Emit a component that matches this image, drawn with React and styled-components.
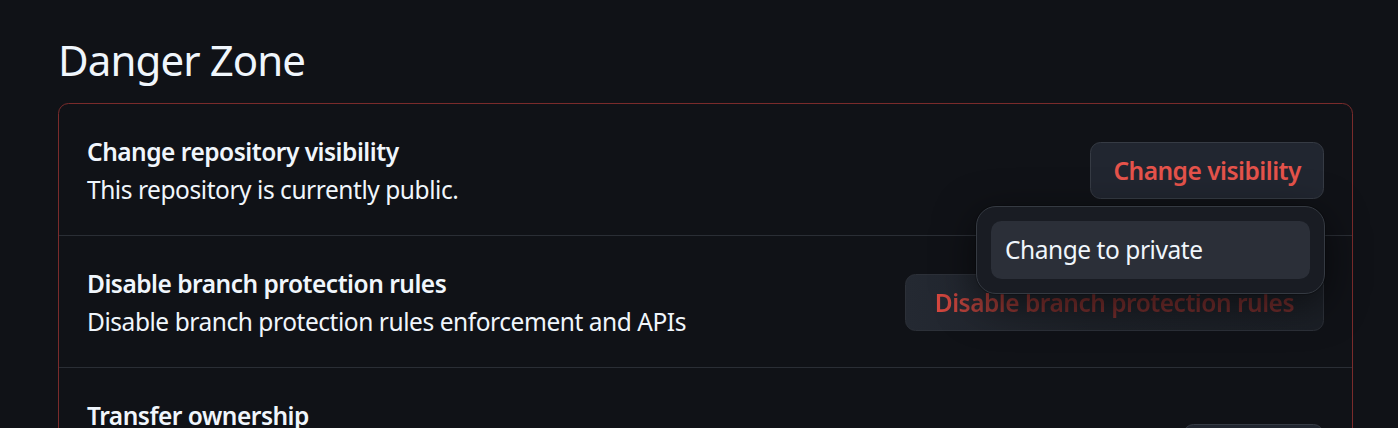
import React from "react";
import styled, { createGlobalStyle } from "styled-components";

const GlobalStyle = createGlobalStyle`
  html, body {
    margin: 0;
    background: #101217;
  }
  body {
    font-family: "Noto Sans", "Open Sans", sans-serif;
    color: #f0f6fc;
  }
`;

const Page = styled.div`
  padding: 34px 45px 0 58px;
  height: 428px;
  box-sizing: border-box;
  overflow: hidden;
`;

const Heading = styled.h2`
  margin: 0 0 17px;
  font-size: 42px;
  line-height: 52px;
  font-weight: 400;
  letter-spacing: -0.9px;
  color: #f0f6fc;
`;

const Box = styled.div`
  border: 1px solid #7a2b2b;
  border-radius: 10.5px;
`;

const Row = styled.div`
  display: flex;
  align-items: center;
  gap: 28px;
  padding: 29px 28px 27px;
  border-top: ${(p) => (p.first ? "none" : "1px solid #2a2e35")};
`;

const Info = styled.div`
  flex: 1;
  min-width: 0;
`;

const Title = styled.div`
  font-size: 24.5px;
  line-height: 37.5px;
  font-weight: 600;
  letter-spacing: -0.5px;
`;

const Desc = styled.div`
  font-size: 24.5px;
  line-height: 37.5px;
  font-weight: 400;
  letter-spacing: -0.45px;
`;

const Action = styled.div`
  position: relative;
  flex-shrink: 0;
  margin-top: -1px;
`;

const Button = styled.button`
  display: block;
  height: 57px;
  padding: 0 22px;
  border: 1px solid #363b44;
  border-radius: 10.5px;
  background: #212630;
  font-family: inherit;
  font-size: 24.5px;
  font-weight: 600;
  letter-spacing: -0.5px;
  color: #e5534b;
  white-space: nowrap;
  cursor: pointer;

  &:disabled {
    cursor: default;
    padding: 0 29px;
    background: linear-gradient(90deg, #242932 0, #1d2128 45%, #1b1f26 100%);
    border-color: #2c3038;
  }
`;

const FadedLabel = styled.span`
  background: linear-gradient(90deg, #d9483f 0, #a33c37 40px, #742d2c 120px, #6e2b2b 100%);
  -webkit-background-clip: text;
  background-clip: text;
  color: transparent;
`;

const Menu = styled.div`
  position: absolute;
  top: calc(100% + 7px);
  right: -1px;
  width: 349px;
  box-sizing: border-box;
  padding: 14px;
  background: #191c23;
  border: 1px solid #353a42;
  border-radius: 20px;
  box-shadow: 0 10px 40px rgba(0, 0, 0, 0.55), 0 0 0 1px rgba(0, 0, 0, 0.2);
  z-index: 10;
`;

const MenuItem = styled.div`
  height: 58px;
  display: flex;
  align-items: center;
  padding: 0 14px;
  border-radius: 10.5px;
  background: #2b2f38;
  font-size: 24.5px;
  letter-spacing: -0.45px;
  color: #f0f6fc;
`;

export default function App() {
  return (
    <Page>
      <GlobalStyle />
      <Heading>Danger Zone</Heading>
      <Box>
        <Row first>
          <Info>
            <Title>Change repository visibility</Title>
            <Desc>This repository is currently public.</Desc>
          </Info>
          <Action>
            <Button>Change visibility</Button>
            <Menu>
              <MenuItem>Change to private</MenuItem>
            </Menu>
          </Action>
        </Row>
        <Row>
          <Info>
            <Title>Disable branch protection rules</Title>
            <Desc>Disable branch protection rules enforcement and APIs</Desc>
          </Info>
          <Action style={{ zIndex: 0 }}>
            <Button disabled>
              <FadedLabel>Disable branch protection rules</FadedLabel>
            </Button>
          </Action>
        </Row>
        <Row>
          <Info>
            <Title>Transfer ownership</Title>
            <Desc>
              Transfer this repository to another user or to an organization
              where you have the ability to create repositories.
            </Desc>
          </Info>
          <Action>
            <Button>Transfer</Button>
          </Action>
        </Row>
      </Box>
    </Page>
  );
}
